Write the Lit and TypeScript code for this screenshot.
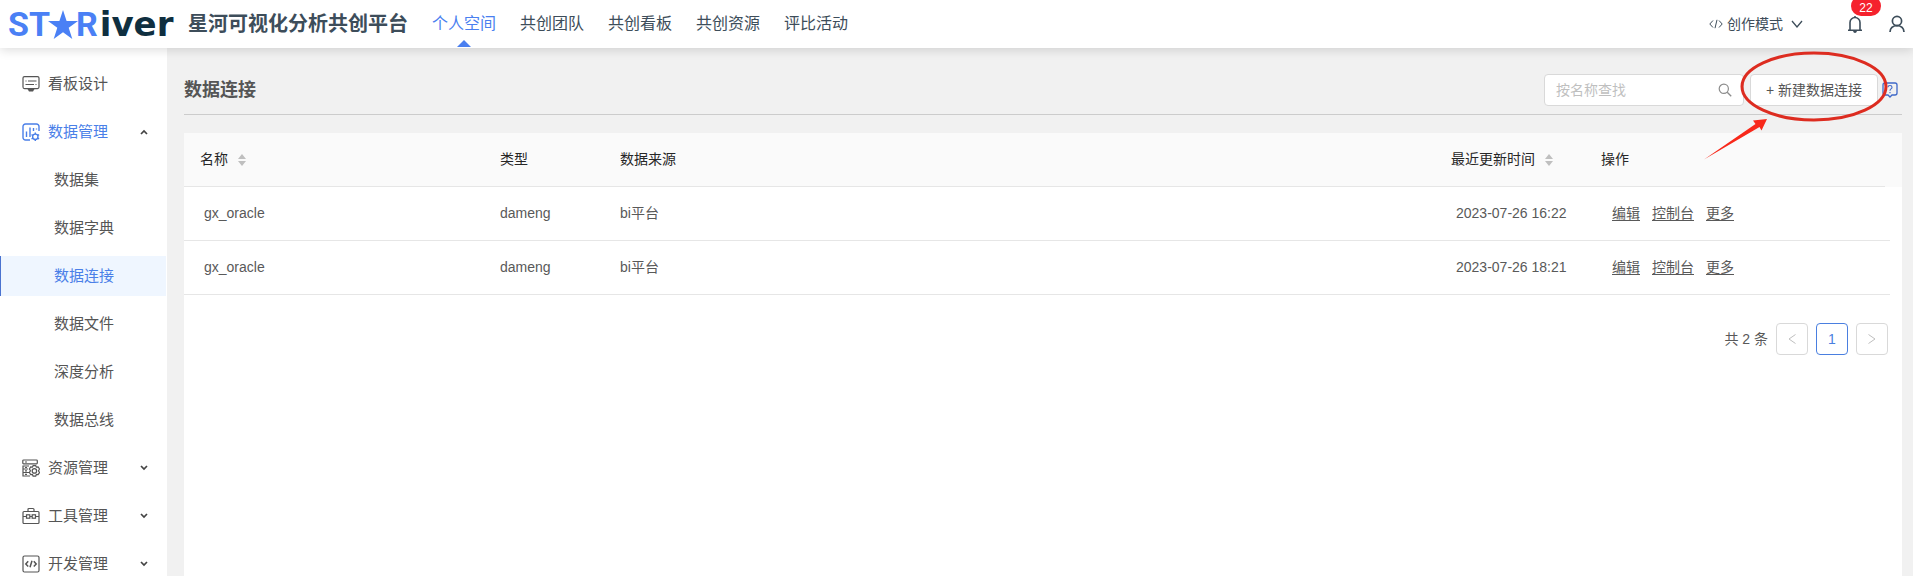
import { LitElement, html, css, svg, nothing } from "lit";
import { customElement, state } from "lit/decorators.js";
import { classMap } from "lit/directives/class-map.js";

const icons = {
  board: svg`<path d="M2.500 1.600h13q1.500 0 1.500 1.500v9q0 1.500-1.500 1.500h-13Q1 13.600 1 12.100v-9q0-1.500 1.500-1.500z"/><path d="M3.500 6h1M6 6h8.500M3.500 9.500h8.500M13.500 9.500h1"/><path d="M5.500 14h7l-1.500 2.600H7z" fill="currentColor" stroke="none"/>`,
  data: svg`<path d="M8 17H3.500A2.500 2.500 0 0 1 1 14.500V3.500A2.500 2.500 0 0 1 3.500 1h11A2.500 2.500 0 0 1 17 3.500V8M4.500 8.500v5.500M8 4.500v9.500M11.500 5v3M14.500 5.500v1" stroke-width="1.400"/><circle cx="13.300" cy="13.800" r="2.700" stroke-width="1.400"/><path d="M13.300 9.500v1.600M13.300 16.500v1.500M9.500 11.600l1.500.9M15.600 15.100l1.500.9M9.500 16l1.500-.9M15.600 12.500l1.500-.9" stroke-width="1.400"/>`,
  resource: svg`<rect x=".8" y="1" width="14.500" height="3.800" rx=".8"/><path d="M3 3h2M7 7H1v3h5M6 10H1v3.500h5M7 13.500H1V17h7M3 8.500h2M3 11.800h2M3 15.300h2"/><path d="M11.100 6.700h2.600l.7 1.500 1.700-.2 1.400 2-1 1.800 1 1.800-1.400 2-1.700-.2-.7 1.700h-2.600l-.7-1.700-1.700.2-1.300-2 1-1.800-1-1.800 1.300-2 1.700.2z"/><circle cx="12.400" cy="11.900" r="2.200"/>`,
  tool: svg`<rect x="1" y="4.500" width="16" height="12" rx="1"/><path d="M6 4.300V2.600Q6 1.500 7 1.500h4q1 0 1 1.100v1.700M1 9.500h3.500M8 9.500h2M13.500 9.500H17"/><rect x="4.500" y="7.800" width="3.300" height="3.400"/><rect x="10.200" y="7.800" width="3.300" height="3.400"/>`,
  dev: svg`<rect x="1" y="1" width="16" height="16" rx="1.500"/><path d="M6.200 6.300L3.800 9l2.400 2.500M11.800 6.300L14.200 9l-2.400 2.500M10 5.800l-2 6.400" stroke-width="1.500"/>`,
};

type Item = { label: string; icon?: keyof typeof icons; arrow?: "up" | "down"; state?: string };

const MENU: Item[] = [
  { label: "看板设计", icon: "board" },
  { label: "数据管理", icon: "data", arrow: "up", state: "open" },
  { label: "数据集" },
  { label: "数据字典" },
  { label: "数据连接", state: "selected" },
  { label: "数据文件" },
  { label: "深度分析" },
  { label: "数据总线" },
  { label: "资源管理", icon: "resource", arrow: "down" },
  { label: "工具管理", icon: "tool", arrow: "down" },
  { label: "开发管理", icon: "dev", arrow: "down" },
];

const ROWS = [
  { name: "gx_oracle", type: "dameng", source: "bi平台", time: "2023-07-26 16:22" },
  { name: "gx_oracle", type: "dameng", source: "bi平台", time: "2023-07-26 18:21" },
];

const base = css`
  :host { box-sizing: border-box; font-family: "Liberation Sans", "Noto Sans CJK SC", sans-serif; }
  *, *::before { box-sizing: border-box; }
  a { color: inherit; text-decoration: none; }
  button { font: inherit; color: inherit; background: none; border: 0; padding: 0; cursor: pointer; }
  svg { display: block; fill: none; stroke: currentColor; }
`;

@customElement("top-bar")
class TopBar extends LitElement {
  static styles = [base, css`
    :host { display: flex; align-items: center; height: 48px; padding: 0 8px; background: #fff; color: #3d4d5a;
      position: relative; z-index: 1; box-shadow: 0 2px 10px rgba(0, 0, 0, 0.14); }
    .logo { display: flex; align-items: center; width: 164px; height: 48px; color: #4a80f5; white-space: nowrap; }
    .caps { font: 700 34px/50px Roboto, sans-serif; }
    .tail { margin-left: 2px; font: 700 34px/50px "DejaVu Sans", sans-serif; color: #0f2f40; }
    .star { fill: currentColor; stroke: none; flex: none; margin: 0 -2px; }
    h1 { margin: 0 0 0 16px; font-size: 20px; line-height: 48px; font-weight: 700; white-space: nowrap; }
    nav { display: flex; margin-left: 12px; flex: 1; }
    .tab { position: relative; padding: 0 12px; font-size: 16px; line-height: 48px; height: 48px; white-space: nowrap; }
    .on { color: #4a7ff0; }
    .on::before { content: ""; position: absolute; left: 50%; bottom: 1px; margin-left: -7px; border: 7px solid transparent; border-top: 0; border-bottom-color: #4a7ff0; }
    .mode { display: flex; align-items: center; gap: 4px; font-size: 14px; line-height: 20px; }
    .mode .down { margin-left: 4px; }
    .bell { position: relative; margin-left: 44px; }
    .badge { position: absolute; left: 4px; top: -19px; width: 30px; height: 20px; border-radius: 10px; background: #f5222d; color: #fff; font-size: 12px; line-height: 24px; text-align: center; }
    .user { margin-left: 26px; }
  `];
  render() {
    return html`
      <a class="logo" href="#" aria-label="STARiver"><span class="caps">ST</span><svg class="star" width="30" height="29" viewBox="0 0 30 29"><path d="M15 0l3.600 11H30l-9.300 6.800L24.300 29 15 22.300 5.700 29l3.600-11.200L0 11h11.400z"/></svg><span class="caps">R</span><span class="tail">iver</span></a>
      <h1>星河可视化分析共创平台</h1>
      <nav>${["个人空间", "共创团队", "共创看板", "共创资源", "评比活动"].map((t, i) => html`<a href="#" class=${classMap({ tab: true, on: i === 0 })}>${t}</a>`)}</nav>
      <button class="mode">
        <svg width="14" height="10" viewBox="0 0 14 10"><path d="M4 1.500L.8 5 4 8.500M10 1.500L13.200 5 10 8.500M8 .8L6 9.200"/></svg>创作模式
        <svg class="down" width="12" height="8" viewBox="0 0 12 8"><path d="M1 1l5 6 5-6" stroke-width="1.300"/></svg>
      </button>
      <button class="bell" aria-label="消息">
        <svg width="16" height="18" viewBox="0 0 16 18"><path d="M1 15.200h14M3 15V7.500a5 5 0 0 1 10 0V15M8 1v1.500" stroke-width="1.600"/><path d="M6 16h4q-.5 2-2 2t-2-2z" fill="currentColor" stroke="none"/></svg>
        <span class="badge">22</span>
      </button>
      <button class="user" aria-label="用户"><svg width="16" height="18" viewBox="0 0 16 18"><circle cx="8" cy="6" r="4.600" stroke-width="1.700"/><path d="M1 17q.3-6 7-6.500 6.700.5 7 6.500" stroke-width="1.700"/></svg></button>
    `;
  }
}

@customElement("side-menu")
class SideMenu extends LitElement {
  static styles = [base, css`
    :host { display: flex; flex-direction: column; gap: 8px; padding: 16px 1px 0 0; background: #fff; color: #555; overflow: hidden; }
    .item { display: flex; align-items: center; flex: none; height: 40px; padding: 0 17px 0 22px; gap: 8px; font-size: 15px; line-height: 40px; }
    .label { flex: 1; }
    .sub { padding-left: 54px; }
    .open, .selected { color: #4a7fe8; }
    .selected { background: #eff6ff; box-shadow: inset 1px 0 #4a73d0; }
    .arrow { color: #444; }
  `];
  render() {
    return MENU.map((m) => html`
      <a href="#" class=${classMap({ item: true, sub: !m.icon, open: m.state === "open", selected: m.state === "selected" })}>
        ${m.icon ? html`<svg width="18" height="18" viewBox="0 0 18 18" stroke-width="1.200">${icons[m.icon]}</svg>` : nothing}
        <span class="label">${m.label}</span>
        ${m.arrow ? html`<svg class="arrow" width="10" height="8" viewBox="0 0 10 8" stroke-width="1.700"><path d=${m.arrow === "up" ? "M2 6l3-3 3 3" : "M2 2l3 3 3-3"}/></svg>` : nothing}
      </a>`);
  }
}

@customElement("connection-table")
class ConnectionTable extends LitElement {
  static styles = [base, css`
    :host { display: block; background: #fff; color: #595959; font-size: 14px; line-height: 20px; }
    table { width: 100%; table-layout: fixed; border-collapse: separate; border-spacing: 0; }
    .w-name { width: 300px; } .w-type { width: 120px; } .w-time { width: 150px; } .w-ops { width: 300px; } .w-edge { width: 5px; } .w-bar { width: 12px; }
    th, td { height: 54px; padding: 0 16px 2px; border-bottom: 1px solid #e6e6e6; white-space: nowrap; }
    th { text-align: left; font-weight: 400; color: #262626; background: #fafafa; }
    .head { display: flex; align-items: center; gap: 10px; }
    .sort { padding-top: 2px; }
    .sort svg { fill: #bfbfbf; stroke: none; }
    .plain { border-bottom-color: transparent; padding: 0; }
    th.plain { border-bottom-color: #fafafa; }
    .name { padding-left: 20px; }
    .time { padding-left: 21px; }
    .ops { padding-left: 27px; }
    .links { display: flex; gap: 12px; }
    .links a { text-decoration: underline; text-underline-offset: 2px; }
    .pager { display: flex; justify-content: flex-end; align-items: center; gap: 8px; padding: 28px 14px 28px 0; }
    .page { display: grid; place-items: center; width: 32px; height: 32px; border: 1px solid #d9d9d9; border-radius: 4px; background: #fff; color: #bfbfbf; }
    .current { border-color: #4a7fe0; color: #4a7fe0; }
  `];
  sorter() {
    return html`<button class="sort" aria-label="排序"><svg width="8" height="12" viewBox="0 0 8 12"><path d="M0 5l4-5 4 5zM0 7h8l-4 5z"/></svg></button>`;
  }
  render() {
    return html`
      <table>
        <colgroup><col class="w-name"><col class="w-type"><col><col class="w-time"><col class="w-ops"><col class="w-edge"><col class="w-bar"></colgroup>
        <thead><tr>
          <th><span class="head">名称 ${this.sorter()}</span></th><th>类型</th><th>数据来源</th>
          <th><span class="head">最近更新时间 ${this.sorter()}</span></th><th>操作</th><th class="plain" colspan="2"></th>
        </tr></thead>
        <tbody>${ROWS.map((r) => html`<tr>
          <td class="name">${r.name}</td><td>${r.type}</td><td>${r.source}</td><td class="time">${r.time}</td>
          <td class="ops" colspan="2"><span class="links"><a href="#">编辑</a><a href="#">控制台</a><a href="#">更多</a></span></td>
          <td class="plain"></td></tr>`)}</tbody>
      </table>
      <div class="pager">
        <span>共 2 条</span>
        <button class="page" aria-label="上一页"><svg width="8" height="10" viewBox="0 0 8 10"><path d="M7.500.5L1 5l6.500 4.500"/></svg></button>
        <button class="page current">1</button>
        <button class="page" aria-label="下一页"><svg width="8" height="10" viewBox="0 0 8 10"><path d="M.5.5L7 5 .5 9.500"/></svg></button>
      </div>`;
  }
}

@customElement("app-root")
class AppRoot extends LitElement {
  @state() private query = "";
  static styles = [base, css`
    :host { display: flex; flex-direction: column; height: 100vh; overflow: hidden; background: #f1f1f1; }
    .body { display: grid; grid-template-columns: 167px minmax(0, 1fr); flex: 1; min-height: 0; }
    main { display: flex; flex-direction: column; min-height: 0; padding: 0 11px 0 17px; }
    .bar { display: flex; align-items: center; flex: none; height: 67px; padding: 18px 4px 0 0; margin-bottom: 18px; border-bottom: 1px solid #ccc; color: #555; }
    h2 { margin: 0; flex: 1; font-size: 18px; line-height: 24px; font-weight: 700; }
    .search { display: flex; align-items: center; width: 200px; height: 32px; padding: 0 11px; margin-right: 6px; border: 1px solid #d9d9d9; border-radius: 4px; background: #fff; color: #8c8c8c; }
    .search input { flex: 1; min-width: 0; height: 30px; padding: 0; border: 0; outline: 0; background: none; font: inherit; font-size: 14px; color: #555; }
    .search input::placeholder { color: #bfbfbf; }
    .spot { position: relative; }
    .create { display: block; width: 128px; height: 32px; padding-bottom: 2px; border: 1px solid #d9d9d9; border-radius: 4px; background: #fff; font-size: 14px; white-space: nowrap; }
    .mark { position: absolute; left: -50px; top: -24px; z-index: 2; pointer-events: none; color: #dd2c20; overflow: visible; }
    .help { margin-left: 4px; color: #3f68c8; }
    connection-table { flex: 1; }
  `];
  render() {
    return html`
      <top-bar></top-bar>
      <div class="body">
        <side-menu></side-menu>
        <main>
          <div class="bar">
            <h2>数据连接</h2>
            <label class="search">
              <input aria-label="按名称查找" placeholder="按名称查找" .value=${this.query} @input=${(e: Event) => (this.query = (e.target as HTMLInputElement).value)}>
              <svg width="14" height="14" viewBox="0 0 14 14"><circle cx="5.800" cy="5.800" r="4.600" stroke-width="1.200"/><path d="M9.200 9.200l4 4" stroke-width="1.300"/></svg>
            </label>
            <div class="spot">
              <button class="create">+ 新建数据连接</button>
              <svg class="mark" width="190" height="112" viewBox="0 0 190 112">
                <ellipse cx="114" cy="36.500" rx="72" ry="33.500" stroke-width="3"/>
                <path d="M4 109.500L55.500 74l-2.500-3.500L67 69l-5.500 11.500L59.500 77z" fill="#f8281a" stroke="none"/>
              </svg>
            </div>
            <button class="help" aria-label="帮助"><svg width="16" height="16" viewBox="0 0 16 16"><path d="M3 1h10q2 0 2 2v8q0 2-2 2h-3l-2 2-2-2H3q-2 0-2-2V3q0-2 2-2z" stroke-width="1.300"/><path d="M6 5.300q0-1.800 2-1.800t2 1.700q0 1-1 1.700T8 8.700M8 10v1.200" stroke-width="1.100"/></svg></button>
          </div>
          <connection-table></connection-table>
        </main>
      </div>`;
  }
}
